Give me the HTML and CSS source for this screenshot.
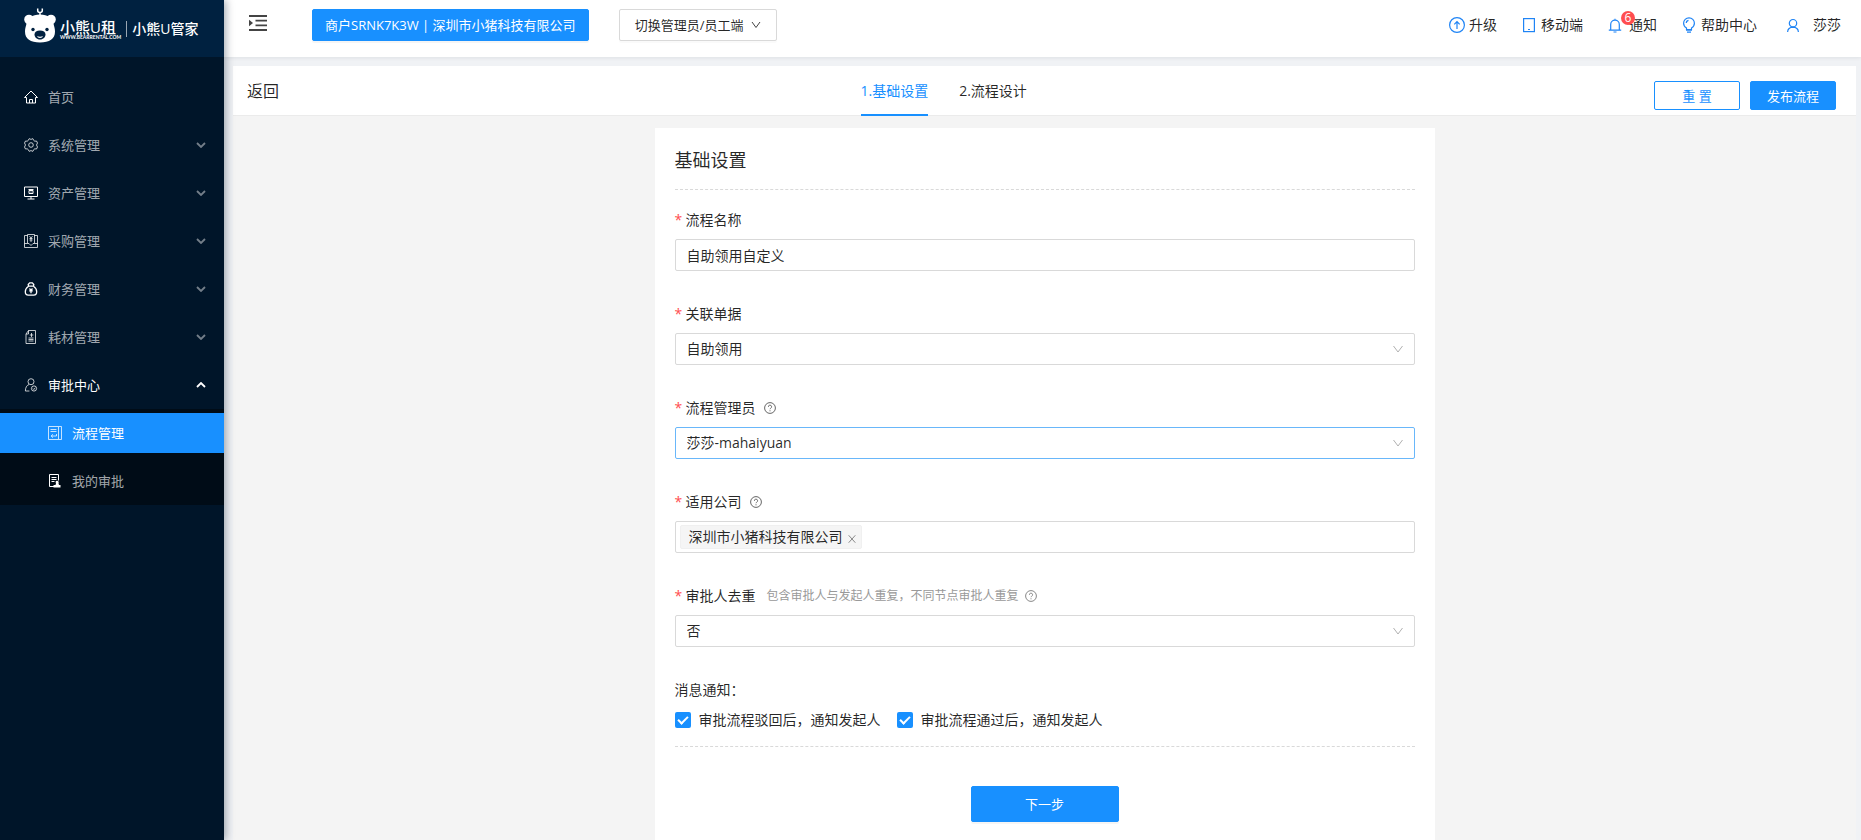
FILE: index.html
```html
<!DOCTYPE html>
<html lang="zh-CN">
<head>
<meta charset="utf-8">
<meta name="viewport" content="width=device-width, initial-scale=1">
<title>流程管理 - 基础设置</title>
<link rel="stylesheet" href="styles.css">
</head>
<body>
<div class="app">
  <aside class="sidebar">
    <a class="logo" href="#">
      <svg class="logo-bear" viewBox="0 0 32 35" aria-hidden="true">
        <path d="M13.700.5v2q0 2 2.300 2t2.300-2v-2M16 4.500V8" fill="none" stroke="#fff" stroke-width="1.500"/>
        <circle cx="5" cy="11.500" r="4.800" fill="#fff"/>
        <circle cx="27" cy="11.500" r="4.800" fill="#fff"/>
        <path d="M16 6.500c8 0 12.500 3.500 13.500 9 .5 3 1.500 4.500 1.500 8 0 7.500-5.500 11-15 11S1 31 1 23.500c0-3.500 1-5 1.500-8 1-5.500 5.500-9 13.500-9z" fill="#fff"/>
        <circle cx="9" cy="21.500" r="1.700" fill="#002140"/>
        <circle cx="23" cy="21.500" r="1.700" fill="#002140"/>
        <path d="M10.500 26.500c0-2.500 2.200-4 5.500-4s5.500 1.500 5.500 4-2.200 5-5.500 5-5.500-2.500-5.500-5z" fill="#002140"/>
        <path d="M13 28q3 1.500 6 0-.5 2-3 2t-3-2z" fill="#fff"/>
      </svg>
      <span class="logo-brand">
        <span class="logo-name">小熊U租</span>
        <span class="logo-site">WWW.BEARRENTAL.COM</span>
      </span>
      <span class="logo-product">小熊U管家</span>
    </a>
    <nav class="menu">
      <a class="menu-item" href="#">
        <svg class="icon icon-bright" viewBox="0 0 14 14"><path d="M.5 7.500L7 1l6.500 6.500H11.500v5.500h-9V7.500zM5.500 13V9.500h3V13"/></svg>
        <span>首页</span>
      </a>
      <a class="menu-item" href="#">
        <svg class="icon" viewBox="0 0 14 14"><path d="M5 .8h1l1 .8 1-.8h1l.8 1.700 1 .7 1.700-.2L13.500 5l-1 2 1 2-1 2-1.700-.2-1 .7-.8 1.700H8l-1-.8-1 .8H5l-.8-1.700-1-.7-1.700.2L.5 9l1-2-1-2 1-2 1.700.2 1-.7z"/><circle cx="7" cy="7" r="2.300"/></svg>
        <span>系统管理</span>
        <svg class="chevron" viewBox="0 0 10 6"><path d="M1 1l4 4 4-4"/></svg>
      </a>
      <a class="menu-item" href="#">
        <svg class="icon icon-bright" viewBox="0 0 14 14"><path d="M.5 1h13v9.500H.5zM7 10.500v2.500M3.500 13h7M4.500 3.500h5M5 4.500h4v3H5zM6.500 6h1"/></svg>
        <span>资产管理</span>
        <svg class="chevron" viewBox="0 0 10 6"><path d="M1 1l4 4 4-4"/></svg>
      </a>
      <a class="menu-item" href="#">
        <svg class="icon" viewBox="0 0 14 14"><path d="M3.500 9V.5h7V9M3.500 1.500h-3v12h13v-12h-3M.5 9.500h4.500l2 2 2-2h4.500M5.500 2.200L7 4l1.500-1.800M5.500 4.500h3M5.500 6h3M7 4v4"/></svg>
        <span>采购管理</span>
        <svg class="chevron" viewBox="0 0 10 6"><path d="M1 1l4 4 4-4"/></svg>
      </a>
      <a class="menu-item" href="#">
        <svg class="icon icon-bold" viewBox="0 0 14 14"><path d="M4.500 4.200L4.200 2.500 5.700.9h2.600l1.500 1.600-.3 1.700zM4.500 4.200C2.500 5.500 1.300 7.500 1.300 9.700c0 2.300 1 3.400 3 3.400h5.400c2 0 3-1.100 3-3.400 0-2.200-1.200-4.200-3.200-5.500M5.500 6.500L7 8.300l1.500-1.800M5.200 8.800h3.600M7 8.500v2.800"/></svg>
        <span>财务管理</span>
        <svg class="chevron" viewBox="0 0 10 6"><path d="M1 1l4 4 4-4"/></svg>
      </a>
      <a class="menu-item" href="#">
        <svg class="icon" viewBox="0 0 14 14"><path d="M4.500.5h7v13H2V4zM4.500.5v3.500H2M7.500 3v4M5.800 5h3.500M4.500 8h5M4.500 9.500h5M4.500 11h5"/></svg>
        <span>耗材管理</span>
        <svg class="chevron" viewBox="0 0 10 6"><path d="M1 1l4 4 4-4"/></svg>
      </a>
      <a class="menu-item is-open" href="#">
        <svg class="icon" viewBox="0 0 14 14"><circle cx="7" cy="3.700" r="3"/><path d="M5 6.500C2.500 7.500 1.500 9.500 1.400 13h4"/><circle cx="10" cy="10.500" r="2.600"/><path d="M8.800 10.500l1 1 1.500-1.700"/></svg>
        <span>审批中心</span>
        <svg class="chevron" viewBox="0 0 10 6"><path d="M1 5l4-4 4 4"/></svg>
      </a>
      <div class="submenu">
        <a class="menu-item is-active" href="#">
          <svg class="icon" viewBox="0 0 14 14"><path d="M.5.500h10v13H.5zM10.500.500h3v13h-3M2.500 3.500h6M2.500 5.500h6M3 10h5.500V8M5 8.300L3.200 10 5 11.700"/></svg>
          <span>流程管理</span>
        </a>
        <a class="menu-item" href="#">
          <svg class="icon icon-bright" viewBox="0 0 14 14"><path d="M6 12.500H1.500V.5h9v6M3.500 3.500h5M3.500 5.500h5M3.500 7.500h3"/><path class="solid" d="M9 6.800a1.600 1.600 0 0 1 1.500 2.400l.5 1.800h1.500v2.500h-7V11h2l.5-1.800a1.600 1.600 0 0 1 1-2.400z"/></svg>
          <span>我的审批</span>
        </a>
      </div>
    </nav>
  </aside>

  <div class="main">
    <header class="header">
      <button class="fold" type="button" aria-label="展开菜单">
        <svg viewBox="0 0 18 16"><path d="M0 1h18M6.500 5.700h11.500M6.500 10.300h11.500M0 15h18" fill="none" stroke="#444" stroke-width="1.800"/><path d="M0 4.700l4 3.300-4 3.300z" fill="#444"/></svg>
      </button>
      <button class="btn btn-primary btn-merchant" type="button">商户SRNK7K3W | 深圳市小猪科技有限公司</button>
      <button class="btn btn-switch" type="button">切换管理员/员工端
        <svg viewBox="0 0 10 8"><path d="M1 1l4 5.500L9 1"/></svg>
      </button>
      <nav class="tools">
        <a class="tool" href="#">
          <svg class="tool-icon" viewBox="0 0 16 16"><circle cx="8" cy="8" r="7.400"/><path d="M8 12V5M5.300 7.300L8 4.600l2.700 2.700"/></svg>升级</a>
        <a class="tool" href="#">
          <svg class="tool-icon" viewBox="0 0 16 16"><rect x="2.600" y="1.600" width="10.800" height="13"/><path d="M7 12.500h2"/></svg>移动端</a>
        <a class="tool tool-notice" href="#">
          <svg class="tool-icon" viewBox="0 0 16 16"><path d="M3.700 13V7.500a4.300 4.300 0 0 1 8.600 0V13M1.800 13.200h12.400M8 3.200V1.800M6.500 15h3"/></svg>
          <span class="badge">6</span>通知</a>
        <a class="tool" href="#">
          <svg class="tool-icon" viewBox="0 0 16 16"><path d="M5.500 11C3.500 9.800 2.600 8.200 2.600 6.200a5.400 5.400 0 0 1 10.800 0c0 2-.9 3.600-2.900 4.800v1.500h-5zM5 13.200h6M6 15.200h4M5.300 6q0-2.300 2.200-2.700"/></svg>帮助中心</a>
        <a class="tool tool-user" href="#">
          <svg class="tool-icon" viewBox="0 0 16 16"><circle cx="8" cy="6.200" r="3.700"/><path d="M2.600 15q.3-4.800 5.400-4.900 5.100.1 5.400 4.900"/></svg>莎莎</a>
      </nav>
    </header>

    <main class="page">
      <div class="topbar">
        <a class="back" href="#">返回</a>
        <nav class="tabs">
          <a class="tab is-current" href="#">1.基础设置</a>
          <a class="tab" href="#">2.流程设计</a>
        </nav>
        <div class="actions">
          <button class="btn btn-outline" type="reset" form="basic-form">重 置</button>
          <button class="btn btn-primary" type="button">发布流程</button>
        </div>
      </div>

      <form class="card" id="basic-form">
        <h1 class="card-title">基础设置</h1>

        <div class="field">
          <div class="label-row"><label class="required" for="name">流程名称</label></div>
          <input class="control" id="name" type="text" value="自助领用自定义">
        </div>

        <div class="field">
          <div class="label-row"><label class="required" for="bill">关联单据</label></div>
          <div class="select-box">
            <select class="control" id="bill"><option>自助领用</option></select>
            <svg class="caret" viewBox="0 0 10 8"><path d="M.5 1L5 7l4.500-6"/></svg>
          </div>
        </div>

        <div class="field">
          <div class="label-row"><label class="required" for="admin">流程管理员</label>
            <svg class="help" viewBox="0 0 12 12"><circle cx="6" cy="6" r="5.400"/><path d="M4.400 4.800a1.600 1.600 0 1 1 2.300 1.400q-.7.400-.7 1M6 8.300v1"/></svg>
          </div>
          <div class="select-box">
            <select class="control is-focus" id="admin"><option>莎莎-mahaiyuan</option></select>
            <svg class="caret" viewBox="0 0 10 8"><path d="M.5 1L5 7l4.500-6"/></svg>
          </div>
        </div>

        <div class="field">
          <div class="label-row"><label class="required" for="company">适用公司</label>
            <svg class="help" viewBox="0 0 12 12"><circle cx="6" cy="6" r="5.400"/><path d="M4.400 4.800a1.600 1.600 0 1 1 2.300 1.400q-.7.400-.7 1M6 8.300v1"/></svg>
          </div>
          <div class="control tag-box">
            <span class="tag">深圳市小猪科技有限公司
              <button class="tag-close" type="button" aria-label="移除"><svg viewBox="0 0 8 8"><path d="M.7.300l6.600 7.400M7.300.300L.7 7.700"/></svg></button>
            </span>
            <input class="tag-input" id="company" type="text">
          </div>
        </div>

        <div class="field">
          <div class="label-row"><label class="required" for="dedupe">审批人去重</label>
            <span class="hint">包含审批人与发起人重复，不同节点审批人重复
              <svg class="help" viewBox="0 0 12 12"><circle cx="6" cy="6" r="5.400"/><path d="M4.400 4.800a1.600 1.600 0 1 1 2.300 1.400q-.7.400-.7 1M6 8.300v1"/></svg></span>
          </div>
          <div class="select-box">
            <select class="control" id="dedupe"><option>否</option></select>
            <svg class="caret" viewBox="0 0 10 8"><path d="M.5 1L5 7l4.500-6"/></svg>
          </div>
        </div>

        <fieldset class="notify">
          <legend>消息通知：</legend>
          <div class="checks">
            <label class="check"><input type="checkbox" checked>审批流程驳回后，通知发起人</label>
            <label class="check"><input type="checkbox" checked>审批流程通过后，通知发起人</label>
          </div>
        </fieldset>

        <button class="btn btn-primary btn-next" type="button">下一步</button>
      </form>
    </main>
  </div>
</div>
</body>
</html>
```

FILE: styles.css
```css
:root {
  --blue: #1890ff;
  --text: rgba(0, 0, 0, 0.85);
  --line: #d9d9d9;
}

* {
  box-sizing: border-box;
}

body {
  margin: 0;
  color: var(--text);
  background: #f0f2f5;
  font: 14px/22px "Open Sans", "Noto Sans CJK SC", sans-serif;
}

a {
  color: inherit;
  text-decoration: none;
}

button,
input,
select {
  font: inherit;
  color: inherit;
}

svg {
  display: block;
  flex: none;
}

.app {
  display: flex;
  min-height: 100vh;
}

/* Sidebar */
.sidebar {
  position: relative;
  z-index: 2;
  flex: none;
  width: 224px;
  background: #001529;
  box-shadow: 2px 0 8px rgba(0, 21, 41, 0.35);
}

.logo {
  display: flex;
  align-items: center;
  height: 57px;
  padding-left: 24px;
  color: #fff;
  background: #002140;
}

.logo-bear {
  width: 32px;
  height: 35px;
  margin-bottom: 6px;
}

.logo-brand {
  display: flex;
  flex-direction: column;
  margin-left: 4px;
  padding-right: 5px;
}

.logo-name {
  font-size: 15px;
  font-weight: 500;
  line-height: 16px;
}

.logo-site {
  font-family: Lato, sans-serif;
  font-size: 5px;
  font-weight: 700;
  line-height: 4px;
}

.logo-product {
  padding-left: 5px;
  border-left: 1px solid rgba(255, 255, 255, 0.6);
  font-size: 14px;
  font-weight: 500;
  line-height: 16px;
}

.menu {
  display: flex;
  flex-direction: column;
  gap: 8px;
  padding-top: 20px;
}

.menu-item {
  display: flex;
  align-items: center;
  gap: 10px;
  height: 40px;
  padding: 0 18px 0 24px;
  color: rgba(255, 255, 255, 0.65);
  font-size: 13px;
}

.icon {
  width: 14px;
  height: 14px;
  fill: none;
  stroke: rgba(255, 255, 255, 0.75);
  stroke-width: 1;
}

.icon-bright {
  stroke: #fff;
}

.icon-bold {
  stroke: #fff;
  stroke-width: 1.3;
}

.icon .solid {
  fill: #fff;
  stroke: none;
}

.chevron {
  width: 10px;
  height: 6px;
  margin-left: auto;
  fill: none;
  stroke: rgba(255, 255, 255, 0.45);
  stroke-width: 1.8;
}

.is-open,
.is-active {
  color: #fff;
}

.is-open .chevron {
  stroke: #fff;
}

.submenu {
  display: flex;
  flex-direction: column;
  gap: 8px;
  margin-top: -4px;
  padding: 4px 0;
  background: #000c17;
}

.submenu .menu-item {
  padding-left: 48px;
}

.submenu .is-active {
  color: #fff;
  background: var(--blue);
}

.menu-item.is-open {
  color: #fff;
}

/* Header */
.main {
  display: flex;
  flex: 1;
  flex-direction: column;
  min-width: 0;
}

.header {
  display: flex;
  align-items: flex-start;
  height: 57px;
  padding: 9px 20px 0 25px;
  background: #fff;
  box-shadow: 0 1px 4px rgba(0, 21, 41, 0.08);
}

.fold {
  width: 18px;
  height: 32px;
  margin: 0 45px 0 0;
  padding: 0;
  border: 0;
  background: none;
}

.fold svg {
  width: 18px;
  height: 16px;
  margin-bottom: 4px;
}

.btn {
  padding: 0 15px;
  border: 1px solid var(--line);
  border-radius: 2px;
  background: #fff;
  font-size: 13px;
  line-height: 20px;
  white-space: nowrap;
}

.btn-primary {
  border-color: var(--blue);
  color: #fff;
  background: var(--blue);
}

.btn-merchant {
  height: 32px;
  margin-right: 30px;
  padding: 0 12px;
  box-shadow: 0 2px 0 rgba(0, 0, 0, 0.04);
}

.btn-switch {
  display: flex;
  align-items: center;
  gap: 8px;
  height: 32px;
  box-shadow: 0 2px 0 rgba(0, 0, 0, 0.02);
}

.btn-switch svg {
  width: 10px;
  height: 8px;
  fill: none;
  stroke: #444;
}

.tools {
  display: flex;
  gap: 24px;
  margin-left: auto;
}

.tool {
  display: flex;
  position: relative;
  align-items: center;
  gap: 4px;
  height: 32px;
  white-space: nowrap;
}

.tool-notice {
  gap: 6px;
}

.tool-user {
  gap: 12px;
  margin-left: 4px;
}

.tool-icon {
  width: 16px;
  height: 16px;
  fill: none;
  stroke: #1f84f5;
  stroke-width: 1.2;
}

.badge {
  position: absolute;
  top: 2px;
  left: 14px;
  width: 14px;
  height: 14px;
  border-radius: 7px;
  color: #fff;
  background: #ff4d4f;
  font-size: 12px;
  line-height: 14px;
  text-align: center;
}

/* Page */
.page {
  display: flex;
  flex: 1;
  flex-direction: column;
  align-items: center;
  margin: 9px 5px 0 9px;
  background: #f4f4f4;
}

.topbar {
  display: grid;
  grid-template-columns: 1fr 362px 1fr;
  align-self: stretch;
  height: 50px;
  padding: 0 20px 0 14px;
  border-bottom: 1px solid #ebebeb;
  background: #fff;
}

.back {
  justify-self: start;
  font-size: 16px;
  line-height: 50px;
}

.tabs {
  display: flex;
  gap: 31px;
}

.tab {
  height: 50px;
  line-height: 50px;
}

.is-current {
  border-bottom: 2px solid var(--blue);
  color: var(--blue);
}

.actions {
  display: flex;
  gap: 10px;
  justify-self: end;
  padding-top: 15px;
}

.actions .btn {
  width: 86px;
  height: 29px;
}

.btn-outline {
  border-color: var(--blue);
  color: var(--blue);
}

/* Form card */
.card {
  display: flex;
  flex: 1;
  flex-direction: column;
  width: 100%;
  max-width: 780px;
  margin-top: 12px;
  padding: 20px 20px 18px;
  background: #fff;
}

.card-title {
  margin: 0 0 19px;
  padding-bottom: 17px;
  border-bottom: 1px dashed var(--line);
  font-size: 18px;
  font-weight: 400;
  line-height: 24px;
}

.field {
  display: flex;
  flex-direction: column;
  gap: 8px;
  margin-bottom: 32px;
}

.label-row {
  display: flex;
  align-items: center;
  height: 22px;
  gap: 8px;
}

.required::before {
  display: inline-block;
  width: 11px;
  color: #ff4d4f;
  content: "*";
}

.help {
  width: 12px;
  height: 12px;
  fill: none;
  stroke: #666;
}

.hint {
  display: flex;
  align-items: center;
  gap: 6px;
  margin-left: 3px;
  color: #999;
  font-size: 12px;
}

.hint .help {
  stroke: #888;
}

.control {
  width: 100%;
  height: 32px;
  padding: 0 11px;
  border: 1px solid var(--line);
  border-radius: 2px;
  background: #fff;
  appearance: none;
}

.is-focus {
  border-color: #69b7fa;
}

.select-box {
  display: grid;
  align-items: center;
}

.select-box .control,
.select-box .caret {
  grid-area: 1 / 1;
}

.caret {
  justify-self: end;
  width: 10px;
  height: 8px;
  margin-right: 12px;
  fill: none;
  stroke: #b0b0b0;
  pointer-events: none;
}

.tag-box {
  display: flex;
  align-items: center;
  padding: 0 4px;
}

.tag {
  display: flex;
  align-items: center;
  height: 24px;
  gap: 5px;
  padding: 0 5px 0 8px;
  border: 1px solid #f0f0f0;
  border-radius: 2px;
  background: #f5f5f5;
  white-space: nowrap;
}

.tag-close {
  padding: 3px 0 0;
  border: 0;
  background: none;
}

.tag-close svg {
  width: 8px;
  height: 8px;
  fill: none;
  stroke: #888;
}

.tag-input {
  flex: 1;
  min-width: 0;
  border: 0;
  outline: 0;
  background: none;
}

.notify {
  margin: 0 0 39px;
  padding: 0 0 15px;
  border: 0;
  border-bottom: 1px dashed var(--line);
}

.notify legend {
  margin-bottom: 8px;
  padding: 0;
}

.checks {
  display: flex;
  gap: 16px;
}

.check {
  display: flex;
  align-items: center;
  gap: 8px;
}

.check input {
  display: grid;
  place-items: center;
  width: 16px;
  height: 16px;
  margin: 0;
  border-radius: 2px;
  background: var(--blue);
  appearance: none;
}

.check input::after {
  box-sizing: border-box;
  width: 6px;
  height: 10px;
  margin-bottom: 2px;
  border: solid #fff;
  border-width: 0 2px 2px 0;
  content: "";
  transform: rotate(45deg);
}

.check input:not(:checked) {
  border: 1px solid var(--line);
  background: #fff;
}

.btn-next {
  align-self: center;
  width: 148px;
  height: 36px;
  box-shadow: 0 2px 0 rgba(0, 0, 0, 0.04);
}
```
